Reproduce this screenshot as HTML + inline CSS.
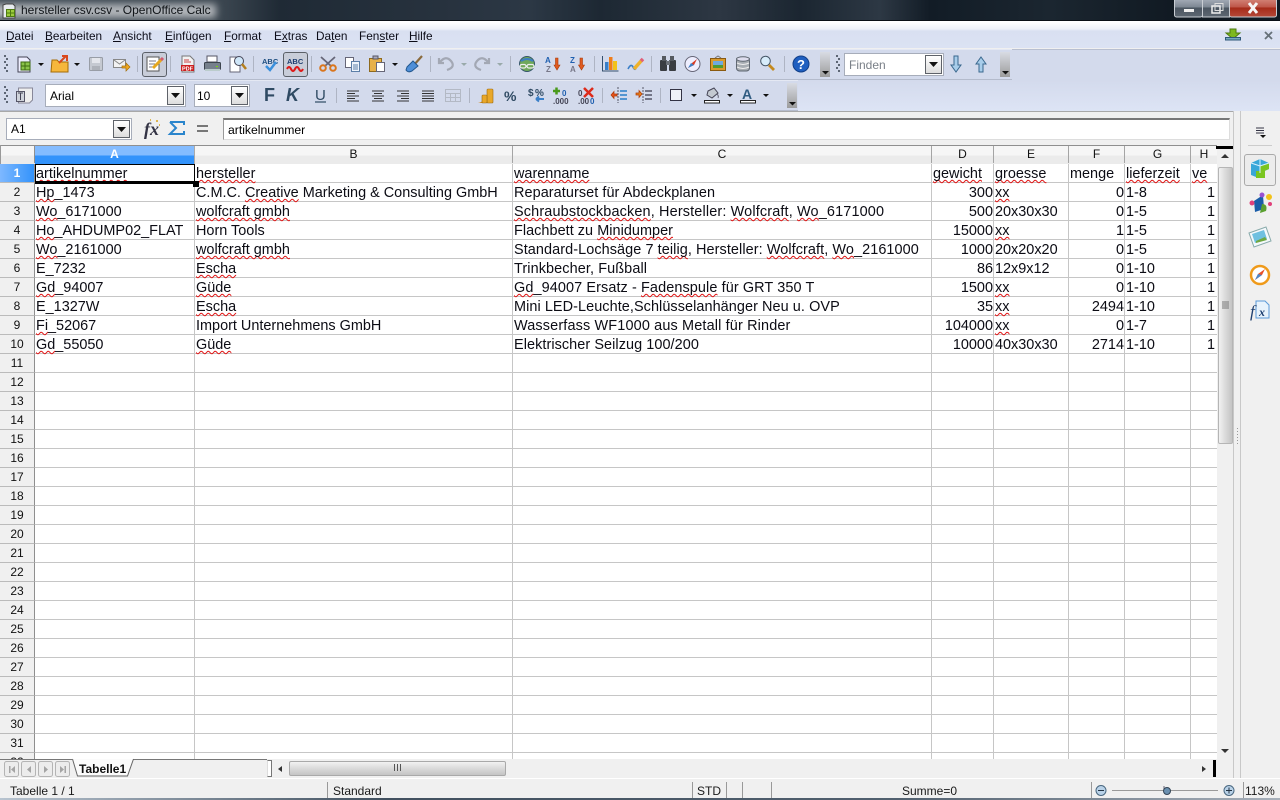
<!DOCTYPE html>
<html lang="de"><head><meta charset="utf-8"><title>hersteller csv.csv - OpenOffice Calc</title>
<style>
html,body{margin:0;padding:0;width:1280px;height:800px;overflow:hidden;background:#f0f0f0}
body{position:relative;font-family:"Liberation Sans",sans-serif;font-size:12px;color:#000}
div,span.p{position:absolute}
.title{left:0;top:0;width:1280px;height:20px;overflow:hidden;background:linear-gradient(90deg,#3f4a54 0,#3a454f 225px,#1f2a35 280px,#27323e 440px,#2c3845 530px,#1d2833 600px,#2d3743 720px,#1b2631 800px,#2d3844 880px,#121c26 930px,#1b2630 1050px,#111a23 1170px)}
.glow{left:-12px;top:4px;width:228px;height:14px;background:#b4b8bc;filter:blur(4px)}
.ttx{left:21px;top:2px;font-size:12px;line-height:16px;color:#101418;white-space:nowrap}
.menu{left:0;top:22px;width:1280px;height:26px;background:linear-gradient(#fff 0,#eef1f8 7px,#d9e0f1 9px,#dbe2f3 26px)}
.m{top:29px;line-height:14px;white-space:nowrap;color:#0c0c18;font-size:11.8px}
.m u{text-decoration:underline}
.tb{left:0;top:49px;width:1280px;height:62px;background:#d3daec;border-top:1px solid #b8bfd0}
.tb2{left:798px;top:80px;width:482px;height:31px;background:linear-gradient(#d3daec,#dde4f5)}
.bar{background:#d3daec;border-bottom:1px solid #b4bbcc;border-top:1px solid #e4e8f3;box-sizing:border-box}
.sep{width:1px;background:#aeb4c3}
.box{background:#fff;border:1px solid #a7adba;box-sizing:border-box}
.dd{background:linear-gradient(#fff,#ddd);border:1px solid #5e6269;box-sizing:border-box}
.ov{width:10px;background:linear-gradient(#d8dbe3,#9c9c9c)}
.fx{left:0;top:111px;width:1280px;height:34px;background:#f0f0f0;border-top:1px solid #a8a8a8;box-sizing:border-box}
.head{left:0;top:145px;width:1217px;height:19px;background:linear-gradient(#f6f6f6 0,#f6f6f6 9px,#ebebeb 10px,#ebebeb 18px);border-top:1px solid #8f8f8f;box-sizing:border-box}
.ch{top:146px;height:17px;line-height:17px;text-align:center;color:#111;border-right:1px solid #a5a5a5;box-sizing:border-box;font-size:12px}
.sheet{left:0;top:164px;width:1217px;height:595px;overflow:hidden;background:#fff}
.rn{left:0;width:35px;height:19px;line-height:18px;text-align:center;background:#f0f0f0;border-right:1px solid #8f8f8f;border-bottom:1px solid #bbb;box-sizing:border-box;font-size:12px;color:#111}
.hl{left:35px;width:1182px;height:1px;background:#c6c6c6}
.vl{top:0;width:1px;height:595px;background:#c6c6c6}
.c{height:19px;line-height:21px;font-size:14.45px;white-space:nowrap;color:#0c0c14}
.c i{font-style:normal;text-decoration:underline wavy #e01010 1px;text-underline-offset:1px;text-decoration-skip-ink:none}
.n{text-align:right}
.st{top:785px;line-height:12px;white-space:nowrap;color:#1a1a1a;font-size:12px}
</style></head><body>
<div class="title"><div class="glow"></div></div>
<div style="left:0;top:20px;width:1280px;height:2px;background:linear-gradient(#0a0f14 50%,#fff 50%)"></div>
<div class="ttx">hersteller csv.csv - OpenOffice Calc</div>
<div class="menu"></div>
<div class="m" style="left:6px"><u>D</u>atei</div>
<div class="m" style="left:45px"><u>B</u>earbeiten</div>
<div class="m" style="left:113px"><u>A</u>nsicht</div>
<div class="m" style="left:165px"><u>E</u>infügen</div>
<div class="m" style="left:224px"><u>F</u>ormat</div>
<div class="m" style="left:274px">E<u>x</u>tras</div>
<div class="m" style="left:316px">Da<u>t</u>en</div>
<div class="m" style="left:359px">Fen<u>s</u>ter</div>
<div class="m" style="left:409px"><u>H</u>ilfe</div>
<div class="tb"></div><div class="tb2"></div>
<div class="bar" style="left:0;top:49px;width:833px;height:31px"></div>
<div class="bar" style="left:833px;top:49px;width:179px;height:31px"></div>
<div class="bar" style="left:0;top:80px;width:798px;height:31px"></div>
<div class="sep" style="left:137px;top:56px;height:16px"></div><div class="sep" style="left:170px;top:56px;height:16px"></div><div class="sep" style="left:253px;top:56px;height:16px"></div><div class="sep" style="left:311px;top:56px;height:16px"></div><div class="sep" style="left:430px;top:56px;height:16px"></div><div class="sep" style="left:510px;top:56px;height:16px"></div><div class="sep" style="left:594px;top:56px;height:16px"></div><div class="sep" style="left:651px;top:56px;height:16px"></div><div class="sep" style="left:784px;top:56px;height:16px"></div>
<div class="sep" style="left:336px;top:88px;height:15px"></div><div class="sep" style="left:469px;top:88px;height:15px"></div><div class="sep" style="left:602px;top:88px;height:15px"></div><div class="sep" style="left:660px;top:88px;height:15px"></div>
<div style="left:142px;top:52px;width:25px;height:25px;background:#c8cdd9;border:1px solid #5b6068;border-radius:3px;box-sizing:border-box"></div>
<div style="left:283px;top:52px;width:25px;height:25px;background:#c8cdd9;border:1px solid #5b6068;border-radius:3px;box-sizing:border-box"></div>
<div class="ov" style="left:820px;top:52px;height:25px"></div>
<div class="ov" style="left:1000px;top:52px;height:25px"></div>
<div class="ov" style="left:787px;top:83px;height:25px"></div>
<div class="box" style="left:844px;top:53px;width:100px;height:23px;line-height:22px;padding-left:4px;color:#7a8088;font-size:12px">Finden</div>
<div class="dd" style="left:925px;top:55px;width:17px;height:19px"></div>
<div class="box" style="left:45px;top:84px;width:141px;height:23px;line-height:22px;padding-left:4px;font-size:12px">Arial</div>
<div class="dd" style="left:167px;top:86px;width:17px;height:19px"></div>
<div class="box" style="left:194px;top:84px;width:56px;height:23px;line-height:22px;padding-left:2px;font-size:12px">10</div>
<div class="dd" style="left:231px;top:86px;width:17px;height:19px"></div>
<div class="fx"></div>
<div class="box" style="left:6px;top:118px;width:126px;height:22px;line-height:20px;padding-left:4px;font-size:12px">A1</div>
<div class="dd" style="left:113px;top:120px;width:17px;height:18px"></div>
<div class="box" style="left:223px;top:118px;width:1007px;height:22px;line-height:20px;padding-left:4px;font-size:12.2px;border-color:#ddd;border-top:2px solid #777;border-left:1px solid #999">artikelnummer</div>
<div class="head"></div>
<div style="left:35px;top:146px;width:160px;height:18px;background:linear-gradient(#84bcff 0,#84bcff 9px,#3393fb 10px);border-right:1px solid #aaa;box-sizing:border-box;color:#fff;font-weight:bold;text-align:center;line-height:17px">A</div>
<div class="ch" style="left:195px;width:318px">B</div>
<div class="ch" style="left:513px;width:419px">C</div>
<div class="ch" style="left:932px;width:62px">D</div>
<div class="ch" style="left:994px;width:75px">E</div>
<div class="ch" style="left:1069px;width:56px">F</div>
<div class="ch" style="left:1125px;width:66px">G</div>
<div class="ch" style="left:1191px;width:26px;border-right:0">H</div>
<div class="ch" style="left:0;width:35px;border-right:1px solid #8f8f8f"></div>
<div style="left:0;top:145px;width:1px;height:614px;background:#999"></div>
<div class="sheet">
<div class="vl" style="left:194px"></div><div class="vl" style="left:512px"></div><div class="vl" style="left:931px"></div><div class="vl" style="left:993px"></div><div class="vl" style="left:1068px"></div><div class="vl" style="left:1124px"></div><div class="vl" style="left:1190px"></div>
<div class="hl" style="top:18px"></div><div class="hl" style="top:37px"></div><div class="hl" style="top:56px"></div><div class="hl" style="top:75px"></div><div class="hl" style="top:94px"></div><div class="hl" style="top:113px"></div><div class="hl" style="top:132px"></div><div class="hl" style="top:151px"></div><div class="hl" style="top:170px"></div><div class="hl" style="top:189px"></div><div class="hl" style="top:208px"></div><div class="hl" style="top:227px"></div><div class="hl" style="top:246px"></div><div class="hl" style="top:265px"></div><div class="hl" style="top:284px"></div><div class="hl" style="top:303px"></div><div class="hl" style="top:322px"></div><div class="hl" style="top:341px"></div><div class="hl" style="top:360px"></div><div class="hl" style="top:379px"></div><div class="hl" style="top:398px"></div><div class="hl" style="top:417px"></div><div class="hl" style="top:436px"></div><div class="hl" style="top:455px"></div><div class="hl" style="top:474px"></div><div class="hl" style="top:493px"></div><div class="hl" style="top:512px"></div><div class="hl" style="top:531px"></div><div class="hl" style="top:550px"></div><div class="hl" style="top:569px"></div><div class="hl" style="top:588px"></div>
<div class="rn" style="top:0;background:linear-gradient(90deg,#7db8ff,#3393fb);color:#fff;font-weight:bold">1</div>
<div class="rn" style="top:19px">2</div><div class="rn" style="top:38px">3</div><div class="rn" style="top:57px">4</div><div class="rn" style="top:76px">5</div><div class="rn" style="top:95px">6</div><div class="rn" style="top:114px">7</div><div class="rn" style="top:133px">8</div><div class="rn" style="top:152px">9</div><div class="rn" style="top:171px">10</div><div class="rn" style="top:190px">11</div><div class="rn" style="top:209px">12</div><div class="rn" style="top:228px">13</div><div class="rn" style="top:247px">14</div><div class="rn" style="top:266px">15</div><div class="rn" style="top:285px">16</div><div class="rn" style="top:304px">17</div><div class="rn" style="top:323px">18</div><div class="rn" style="top:342px">19</div><div class="rn" style="top:361px">20</div><div class="rn" style="top:380px">21</div><div class="rn" style="top:399px">22</div><div class="rn" style="top:418px">23</div><div class="rn" style="top:437px">24</div><div class="rn" style="top:456px">25</div><div class="rn" style="top:475px">26</div><div class="rn" style="top:494px">27</div><div class="rn" style="top:513px">28</div><div class="rn" style="top:532px">29</div><div class="rn" style="top:551px">30</div><div class="rn" style="top:570px">31</div><div class="rn" style="top:589px">32</div>
<div class="c" style="left:36px;top:0"><i>artikelnummer</i></div><div class="c" style="left:196px;top:0"><i>hersteller</i></div><div class="c" style="left:514px;top:0"><i>warenname</i></div><div class="c" style="left:933px;top:0"><i>gewicht</i></div><div class="c" style="left:995px;top:0"><i>groesse</i></div><div class="c" style="left:1070px;top:0">menge</div><div class="c" style="left:1126px;top:0"><i>lieferzeit</i></div><div class="c" style="left:1192px;top:0"><i>ve</i></div>
<div class="c" style="left:36px;top:19px"><i>Hp</i>_1473</div><div class="c" style="left:196px;top:19px">C.M.C. <i>Creative</i> Marketing &amp; Consulting GmbH</div><div class="c" style="left:514px;top:19px;letter-spacing:.07px">Reparaturset für Abdeckplanen</div><div class="c n" style="left:932px;width:61px;top:19px">300</div><div class="c" style="left:995px;top:19px"><i>xx</i></div><div class="c n" style="left:1069px;width:55px;top:19px">0</div><div class="c" style="left:1126px;top:19px">1-8</div><div class="c n" style="left:1191px;width:24px;top:19px">1</div>
<div class="c" style="left:36px;top:38px"><i>Wo</i>_6171000</div><div class="c" style="left:196px;top:38px"><i>wolfcraft gmbh</i></div><div class="c" style="left:514px;top:38px;letter-spacing:.15px"><i>Schraubstockbacken</i>, Hersteller: <i>Wolfcraft</i>, <i>Wo</i>_6171000</div><div class="c n" style="left:932px;width:61px;top:38px">500</div><div class="c" style="left:995px;top:38px">20x30x30</div><div class="c n" style="left:1069px;width:55px;top:38px">0</div><div class="c" style="left:1126px;top:38px">1-5</div><div class="c n" style="left:1191px;width:24px;top:38px">1</div>
<div class="c" style="left:36px;top:57px"><i>Ho</i>_AHDUMP02_FLAT</div><div class="c" style="left:196px;top:57px">Horn Tools</div><div class="c" style="left:514px;top:57px;letter-spacing:.04px">Flachbett zu <i>Minidumper</i></div><div class="c n" style="left:932px;width:61px;top:57px">15000</div><div class="c" style="left:995px;top:57px"><i>xx</i></div><div class="c n" style="left:1069px;width:55px;top:57px">1</div><div class="c" style="left:1126px;top:57px">1-5</div><div class="c n" style="left:1191px;width:24px;top:57px">1</div>
<div class="c" style="left:36px;top:76px"><i>Wo</i>_2161000</div><div class="c" style="left:196px;top:76px"><i>wolfcraft gmbh</i></div><div class="c" style="left:514px;top:76px;letter-spacing:.08px">Standard-Lochsäge 7 <i>teilig</i>, Hersteller: <i>Wolfcraft</i>, <i>Wo</i>_2161000</div><div class="c n" style="left:932px;width:61px;top:76px">1000</div><div class="c" style="left:995px;top:76px">20x20x20</div><div class="c n" style="left:1069px;width:55px;top:76px">0</div><div class="c" style="left:1126px;top:76px">1-5</div><div class="c n" style="left:1191px;width:24px;top:76px">1</div>
<div class="c" style="left:36px;top:95px">E_7232</div><div class="c" style="left:196px;top:95px"><i>Escha</i></div><div class="c" style="left:514px;top:95px;letter-spacing:.1px">Trinkbecher, Fußball</div><div class="c n" style="left:932px;width:61px;top:95px">86</div><div class="c" style="left:995px;top:95px">12x9x12</div><div class="c n" style="left:1069px;width:55px;top:95px">0</div><div class="c" style="left:1126px;top:95px">1-10</div><div class="c n" style="left:1191px;width:24px;top:95px">1</div>
<div class="c" style="left:36px;top:114px"><i>Gd</i>_94007</div><div class="c" style="left:196px;top:114px"><i>Güde</i></div><div class="c" style="left:514px;top:114px;letter-spacing:.1px"><i>Gd</i>_94007 Ersatz - <i>Fadenspule</i> für GRT 350 T</div><div class="c n" style="left:932px;width:61px;top:114px">1500</div><div class="c" style="left:995px;top:114px"><i>xx</i></div><div class="c n" style="left:1069px;width:55px;top:114px">0</div><div class="c" style="left:1126px;top:114px">1-10</div><div class="c n" style="left:1191px;width:24px;top:114px">1</div>
<div class="c" style="left:36px;top:133px">E_1327W</div><div class="c" style="left:196px;top:133px"><i>Escha</i></div><div class="c" style="left:514px;top:133px;letter-spacing:.07px">Mini LED-Leuchte,Schlüsselanhänger Neu u. OVP</div><div class="c n" style="left:932px;width:61px;top:133px">35</div><div class="c" style="left:995px;top:133px"><i>xx</i></div><div class="c n" style="left:1069px;width:55px;top:133px">2494</div><div class="c" style="left:1126px;top:133px">1-10</div><div class="c n" style="left:1191px;width:24px;top:133px">1</div>
<div class="c" style="left:36px;top:152px"><i>Fi</i>_52067</div><div class="c" style="left:196px;top:152px">Import Unternehmens GmbH</div><div class="c" style="left:514px;top:152px;letter-spacing:.15px">Wasserfass WF1000 aus Metall für Rinder</div><div class="c n" style="left:932px;width:61px;top:152px">104000</div><div class="c" style="left:995px;top:152px"><i>xx</i></div><div class="c n" style="left:1069px;width:55px;top:152px">0</div><div class="c" style="left:1126px;top:152px">1-7</div><div class="c n" style="left:1191px;width:24px;top:152px">1</div>
<div class="c" style="left:36px;top:171px"><i>Gd</i>_55050</div><div class="c" style="left:196px;top:171px"><i>Güde</i></div><div class="c" style="left:514px;top:171px;letter-spacing:.07px">Elektrischer Seilzug 100/200</div><div class="c n" style="left:932px;width:61px;top:171px">10000</div><div class="c" style="left:995px;top:171px">40x30x30</div><div class="c n" style="left:1069px;width:55px;top:171px">2714</div><div class="c" style="left:1126px;top:171px">1-10</div><div class="c n" style="left:1191px;width:24px;top:171px">1</div>
</div>
<div style="left:35px;top:164px;width:160px;height:20px;border:solid #000;border-width:1px 1px 3px 1px;box-sizing:border-box"></div>
<div style="left:193px;top:181px;width:6px;height:6px;background:#000"></div>
<div style="left:1217px;top:145px;width:16px;height:614px;background:#f0f0f0"></div>
<div style="left:1216px;top:146px;width:17px;height:3px;background:#000"></div>
<div style="left:1218px;top:167px;width:15px;height:277px;background:linear-gradient(90deg,#f2f2f2,#dcdcdc 45%,#c4c4c4);border:1px solid #b5b5b5;border-radius:2px;box-sizing:border-box"></div>
<div style="left:0;top:759px;width:1233px;height:19px;background:#f0f0f0"></div>
<div style="left:289px;top:761px;width:217px;height:15px;background:linear-gradient(#f2f2f2,#dcdcdc 45%,#c4c4c4);border:1px solid #a9a9a9;border-radius:2px;box-sizing:border-box"></div>
<div style="left:1213px;top:760px;width:3px;height:17px;background:#000"></div>
<div style="left:267px;top:760px;width:5px;height:17px;background:#fff;border:1px solid #777;border-left-color:#ddd;box-sizing:border-box"></div>
<div style="left:1233px;top:111px;width:47px;height:667px;background:#f0f0f0"></div>
<div style="left:1233px;top:111px;width:1px;height:667px;background:#c8c8c8"></div>
<div style="left:1240px;top:111px;width:1px;height:667px;background:#c8c8c8"></div>
<div style="left:1244px;top:154px;width:32px;height:32px;border:1px solid #aaa;border-radius:3px;box-sizing:border-box;background:#ececec"></div>
<div style="left:0;top:778px;width:1280px;height:22px;background:#f0f0f0;border-top:1px solid #fff;box-sizing:border-box"></div>
<div class="sep" style="left:327px;top:782px;height:16px;background:#999"></div><div class="sep" style="left:692px;top:782px;height:16px;background:#999"></div><div class="sep" style="left:726px;top:782px;height:16px;background:#999"></div><div class="sep" style="left:742px;top:782px;height:16px;background:#999"></div><div class="sep" style="left:771px;top:782px;height:16px;background:#999"></div><div class="sep" style="left:1091px;top:782px;height:16px;background:#999"></div><div class="sep" style="left:1243px;top:782px;height:16px;background:#999"></div>
<div class="st" style="left:10px">Tabelle 1 / 1</div><div class="st" style="left:333px">Standard</div><div class="st" style="left:697px">STD</div><div class="st" style="left:902px">Summe=0</div><div class="st" style="left:1245px">113%</div>
<div style="left:0;top:798px;width:1280px;height:2px;background:linear-gradient(90deg,#b8c4d0,#41505f 30%,#51606f 70%,#a7b0ba)"></div>
<svg width="1280" height="800" viewBox="0 0 1280 800" style="position:absolute;left:0;top:0">
<defs>
<linearGradient id="btn" x1="0" y1="0" x2="0" y2="1"><stop offset="0" stop-color="#aab2bd"/><stop offset=".5" stop-color="#7b8591"/><stop offset=".51" stop-color="#4a5560"/><stop offset="1" stop-color="#5d6772"/></linearGradient>
<linearGradient id="cl" x1="0" y1="0" x2="0" y2="1"><stop offset="0" stop-color="#d58a7e"/><stop offset=".5" stop-color="#bd5446"/><stop offset=".51" stop-color="#a52a18"/><stop offset="1" stop-color="#b54a3a"/></linearGradient>
</defs>
<!-- title icon -->
<path d="M3 5l3-1 7 0 2 2v12H3z" fill="#e8ecef" stroke="#444"/><rect x="6.500" y="9.500" width="8" height="7" fill="#9ccc3c" stroke="#4e7a12"/><path d="M10.500 9.500v7M6.500 13h8" stroke="#4e7a12"/>
<!-- window buttons -->
<rect x="1174.500" y="-2" width="28" height="19" rx="2" fill="url(#btn)" stroke="#c9ced4"/><rect x="1202.500" y="-2" width="27" height="19" fill="url(#btn)" stroke="#c9ced4"/><rect x="1229.500" y="-2" width="47" height="19" rx="2" fill="url(#cl)" stroke="#c9ced4"/>
<rect x="1184" y="9" width="10" height="3" fill="#eee"/><rect x="1212" y="6" width="8" height="7" fill="none" stroke="#eee" stroke-width="1.500"/><rect x="1215" y="3.500" width="8" height="7" fill="none" stroke="#ddd"/>
<path d="M1249 3L1257 13M1257 3L1249 13" stroke="#f6f6f6" stroke-width="3"/>
<!-- menu right -->
<path d="M1230 29h6v4h4l-7 6-7-6h4z" fill="#7db81e" stroke="#4d7a0e"/><rect x="1225.500" y="37.500" width="15" height="2.500" fill="#7ab" stroke="#2f5878"/>
<path d="M1265 32L1272 39M1272 32L1265 39" stroke="#667078" stroke-width="1.800"/>
<!-- grips -->
<g fill="#5d6675"><rect x="4" y="55" width="2" height="2"/><rect x="6" y="58" width="2" height="2"/><rect x="4" y="61" width="2" height="2"/><rect x="6" y="64" width="2" height="2"/><rect x="4" y="67" width="2" height="2"/><rect x="6" y="70" width="2" height="2"/><rect x="4" y="86" width="2" height="2"/><rect x="6" y="89" width="2" height="2"/><rect x="4" y="92" width="2" height="2"/><rect x="6" y="95" width="2" height="2"/><rect x="4" y="98" width="2" height="2"/><rect x="6" y="101" width="2" height="2"/><rect x="836" y="55" width="2" height="2"/><rect x="838" y="58" width="2" height="2"/><rect x="836" y="61" width="2" height="2"/><rect x="838" y="64" width="2" height="2"/><rect x="836" y="67" width="2" height="2"/><rect x="838" y="70" width="2" height="2"/></g>
<!-- small arrows -->
<g fill="#111"><path d="M38 63h6l-3 3z"/><path d="M74 63h6l-3 3z"/><path d="M392 63h6l-3 3z"/><path d="M691 94h6l-3 3z"/><path d="M727 94h6l-3 3z"/><path d="M763 94h6l-3 3z"/><path d="M822 71h7l-3.500 3.500z"/><path d="M1002 71h7l-3.500 3.500z"/><path d="M789 102h7l-3.500 3.500z"/><path d="M929 62h9l-4.500 5z"/><path d="M171 93h9l-4.500 5z"/><path d="M235 93h9l-4.500 5z"/><path d="M117 127h9l-4.500 5z"/></g>
<g fill="#9aa"><path d="M461 63h6l-3 3z"/><path d="M497 63h6l-3 3z"/></g>
<!-- new -->
<path d="M18 57h9l3 3v12H18z" fill="#eef" stroke="#445"/><rect x="21" y="62" width="9" height="8" fill="#8bc34a" stroke="#3e6b12"/><path d="M25 62v8M21 66h9" stroke="#3e6b12"/>
<!-- open -->
<path d="M52 60h5l2 2h9v10H51z" fill="#f6b73c" stroke="#a46c08"/><path d="M59 63L66 56M62 56h5v5" stroke="#d9481c" stroke-width="2" fill="none"/>
<!-- save -->
<rect x="89.500" y="57.500" width="13" height="13" rx="1" fill="#c5c9d1" stroke="#989da6"/><rect x="92" y="58" width="8" height="5" fill="#e4e6ec"/><rect x="92" y="66" width="8" height="4" fill="#aeb2ba"/>
<!-- mail -->
<rect x="113.500" y="59.500" width="12" height="8" fill="#f2f2f2" stroke="#888"/><path d="M114 60l5.500 4 5.500-4" stroke="#888" fill="none"/><path d="M122 66h4v-3l4 4-4 4v-3h-4z" fill="#f1a820" stroke="#a56f08" stroke-width=".7"/>
<!-- doc edit -->
<path d="M147 57h12v14h-12z" fill="#fff" stroke="#555"/><path d="M149 61h7M149 64h6M149 67h5" stroke="#778"/><path d="M153 68L162 59" stroke="#e6a820" stroke-width="3"/><path d="M161 60l2-2" stroke="#d05a70" stroke-width="3"/>
<!-- pdf -->
<path d="M182 56h8l4 4v12h-12z" fill="#f2f2f2" stroke="#777"/><rect x="181" y="65" width="13" height="6" fill="#cc1f1f"/><text x="182" y="70.500" font-size="5.500" font-weight="bold" fill="#fff" font-family="Liberation Sans">PDF</text><path d="M184 60h5M184 62h7" stroke="#c44"/>
<!-- print -->
<rect x="207" y="56" width="10" height="6" fill="#fff" stroke="#556"/><rect x="204.500" y="62.500" width="16" height="7" rx="1" fill="#76808c" stroke="#3c444e"/><rect x="205" y="69" width="15" height="2" fill="#bcc"/><rect x="216" y="66" width="2" height="1" fill="#7d0"/>
<!-- preview -->
<path d="M230 57h10v15h-10z" fill="#fff" stroke="#667"/><circle cx="239" cy="61" r="4.500" fill="#cfe6f8" stroke="#445"/><path d="M242 64l4 5" stroke="#b57f1d" stroke-width="2.500"/>
<!-- spell -->
<text x="262" y="64" font-size="7.500" font-weight="bold" fill="#1d4d7f" font-family="Liberation Sans">ABC</text><path d="M266 66l4 4 6-8" stroke="#3a8fdc" stroke-width="2.500" fill="none"/>
<!-- autospell -->
<text x="287" y="64" font-size="7.500" font-weight="bold" fill="#1d3d6f" font-family="Liberation Sans">ABC</text><path d="M287 69q2-4 4 0t4 0 4 0 4 0" stroke="#dd1a1a" stroke-width="2" fill="none"/>
<!-- scissors -->
<path d="M321 57l10 9M335 57l-10 9" stroke="#667" stroke-width="1.800"/><circle cx="323" cy="68" r="2.800" fill="none" stroke="#d9751c" stroke-width="2"/><circle cx="333" cy="68" r="2.800" fill="none" stroke="#d9751c" stroke-width="2"/>
<!-- copy -->
<path d="M345.500 57.500h8v10h-8z" fill="#fff" stroke="#667"/><path d="M351.500 61.500h8v10h-8z" fill="#eef4fb" stroke="#5c7fa8"/><path d="M353 65h5M353 67h5M353 69h5" stroke="#5c7fa8"/>
<!-- paste -->
<rect x="369.500" y="58.500" width="12" height="13" fill="#e7b14a" stroke="#8e6a1e"/><rect x="373" y="56" width="5" height="3" fill="#aab" stroke="#556"/><path d="M376.500 62.500h8v9h-8z" fill="#fff" stroke="#667"/>
<!-- brush -->
<path d="M413 66l9-10" stroke="#8a6a3c" stroke-width="2.200"/><path d="M407 67l6-6 5 5-6 5q-4 2-6-1z" fill="#4f8fd8" stroke="#23588f"/>
<!-- undo redo -->
<path d="M439 58v5h5M440 62q6-7 11-1t-4 9" fill="none" stroke="#a3a8b4" stroke-width="2.200"/>
<path d="M489 58v5h-5M488 62q-6-7-11-1t4 9" fill="none" stroke="#a3a8b4" stroke-width="2.200"/>
<!-- hyperlink -->
<circle cx="527" cy="64" r="7.500" fill="#6fa85a" stroke="#35566a"/><path d="M521 61q6-4 12 0" fill="none" stroke="#3d7ec2" stroke-width="2"/><rect x="520" y="64.500" width="6" height="3.500" rx="1.700" fill="none" stroke="#eee" stroke-width="1.200"/><rect x="527" y="64.500" width="7" height="3.500" rx="1.700" fill="none" stroke="#eee" stroke-width="1.200"/>
<!-- sort -->
<text x="545" y="63" font-size="8" font-weight="bold" fill="#2060b0" font-family="Liberation Sans">A</text><text x="546" y="72" font-size="8" font-weight="bold" fill="#778" font-family="Liberation Sans">Z</text><path d="M555.500 58h2.500v7h2l-3 5-3-5h1.500z" fill="#e05a20" stroke="#a83a08" stroke-width=".6"/>
<text x="570" y="63" font-size="8" font-weight="bold" fill="#2060b0" font-family="Liberation Sans">Z</text><text x="570" y="72" font-size="8" font-weight="bold" fill="#778" font-family="Liberation Sans">A</text><path d="M580 58h2.500v7h2l-3 5-3-5h1.500z" fill="#e05a20" stroke="#a83a08" stroke-width=".6"/>
<!-- chart -->
<path d="M602.500 56v15h16" fill="none" stroke="#35506e"/><rect x="605" y="62" width="3.500" height="8" fill="#3a7fc8"/><rect x="609" y="57" width="3.500" height="13" fill="#ef7d1a"/><rect x="613" y="61" width="4" height="9" fill="#f2c21a"/>
<!-- draw -->
<path d="M628 69q3-6 5-2t3 1" fill="none" stroke="#3a7fc8" stroke-width="1.600"/><path d="M634 69l8-9" stroke="#efb22a" stroke-width="3.500"/><path d="M641 61l2-2" stroke="#e0607a" stroke-width="3.500"/>
<!-- binoculars -->
<rect x="660" y="60" width="7" height="11" rx="1" fill="#3a3d42"/><rect x="669" y="60" width="7" height="11" rx="1" fill="#3a3d42"/><rect x="662" y="56" width="4" height="5" fill="#555a60"/><rect x="670" y="56" width="4" height="5" fill="#555a60"/><rect x="666" y="61" width="4" height="4" fill="#6b7077"/>
<!-- navigator -->
<circle cx="692.500" cy="64" r="7.500" fill="#eef" stroke="#667"/><path d="M688 68l4-5 5-4-3 6z" fill="#d83a24"/><path d="M688 68l3-5 3 2z" fill="#3a7fc8"/>
<!-- gallery -->
<rect x="710.500" y="58.500" width="15" height="12" fill="#d99a2c" stroke="#8a5a10"/><rect x="713" y="61" width="10" height="7" fill="#6fa9df"/><rect x="713" y="65" width="10" height="3" fill="#4f9a32"/><path d="M715 58l3-2 3 2" fill="none" stroke="#777"/>
<!-- db -->
<rect x="736.500" y="58" width="13" height="13" rx="3" fill="#a7adb3" stroke="#5e6670"/><ellipse cx="743" cy="59" rx="6.500" ry="2.200" fill="#dde" stroke="#5e6670"/><path d="M737 63q6 3 12 0M737 67q6 3 12 0" fill="none" stroke="#eee"/>
<!-- find -->
<circle cx="765.500" cy="61" r="4.800" fill="#d7ecfa" stroke="#456"/><path d="M769 65l5 5" stroke="#c4891e" stroke-width="2.800"/>
<!-- help -->
<circle cx="801" cy="64" r="8" fill="#1f5fc0" stroke="#123f88"/><text x="797" y="69" font-size="13" font-weight="bold" fill="#fff" font-family="Liberation Sans">?</text>
<!-- find arrows -->
<path d="M954 56h4v9h3l-5 7-5-7h3z" fill="#a8cdea" stroke="#3a688e"/><path d="M981 57l5 7h-3v8h-4v-8h-3z" fill="#a8cdea" stroke="#3a688e"/>
<!-- styles -->
<path d="M18.500 88h14v12l-3 3h-11z" fill="#eee" stroke="#889"/><rect x="16.500" y="91.500" width="8" height="10" fill="#cfd3db" stroke="#556"/><path d="M18 93h5M20.500 93v7" stroke="#445"/>
<!-- bold etc -->
<text x="264" y="101" font-size="18" font-weight="bold" fill="#2f4a63" font-family="Liberation Sans">F</text>
<text x="286" y="101" font-size="18" font-weight="bold" font-style="italic" fill="#2f4a63" font-family="Liberation Sans">K</text>
<text x="315" y="100" font-size="15" fill="#2f4a63" font-family="Liberation Sans">U</text><path d="M315 102h11" stroke="#2f4a63" stroke-width="1.200"/>
<path d="M347 91h12M347 93.500h8M347 96h12M347 98.500h8M347 101h12" stroke="#333" fill="none"/>
<path d="M372 91h12M374 93.500h8M372 96h12M374 98.500h8M372 101h12" stroke="#333" fill="none"/>
<path d="M397 91h12M401 93.500h8M397 96h12M401 98.500h8M397 101h12" stroke="#333" fill="none"/>
<path d="M422 91h12M422 93.500h12M422 96h12M422 98.500h12M422 101h12" stroke="#333" fill="none"/>
<path d="M445.500 89.500h15v12h-15zM445.500 93.500h15M445.500 97.500h15M450.500 93.500v8M455.500 93.500v8" fill="none" stroke="#b3b9c5"/>
<!-- currency -->
<path d="M478 103q5-1 7-5h2v5z" fill="#d08a1c"/><g fill="#e9a82a" stroke="#9c6a10" stroke-width=".6"><rect x="487" y="89" width="6" height="14" rx="1"/><rect x="482" y="95" width="5" height="8" rx="1"/></g>
<text x="504" y="101" font-size="14" font-weight="bold" fill="#2f4a63" font-family="Liberation Sans">%</text>
<text x="528" y="96" font-size="10" font-weight="bold" fill="#2f4a63" font-family="Liberation Sans">$</text><text x="535" y="96" font-size="10" font-weight="bold" fill="#2f4a63" font-family="Liberation Sans">%</text><path d="M544 99h-8M536 99l3-2.500M536 99l3 2.500" stroke="#3a7fc8" stroke-width="2"/>
<path d="M553 91h7M556.500 87.500v7" stroke="#4a9a1c" stroke-width="2.500"/><text x="562" y="96" font-size="8" font-weight="bold" fill="#2060b0" font-family="Liberation Sans">0</text><text x="553" y="104" font-size="8" font-weight="bold" fill="#445" font-family="Liberation Sans">.000</text>
<text x="578" y="96" font-size="8" font-weight="bold" fill="#445" font-family="Liberation Sans">0</text><path d="M584 88l9 9M593 88l-9 9" stroke="#dd2a1a" stroke-width="2.500"/><text x="578" y="104" font-size="8" font-weight="bold" fill="#445" font-family="Liberation Sans">.00</text><text x="590" y="104" font-size="8" font-weight="bold" fill="#2060b0" font-family="Liberation Sans">0</text>
<!-- indent -->
<path d="M620 91h7M620 95h7M620 99h7" stroke="#2a80c8" stroke-width="1.500"/><path d="M618 87v16" stroke="#556" stroke-dasharray="2 1"/><path d="M617 96h-3v2.500l-3-3.500 3-3.500v2.500h3z" fill="#e8531a" stroke="#b03a08" stroke-width=".7"/>
<path d="M645 91h7M645 95h7M645 99h7" stroke="#556" stroke-width="1.500"/><path d="M643 87v16" stroke="#556" stroke-dasharray="2 1"/><path d="M636 93h3v-2.500l3 3.500-3 3.500v-2.500h-3z" fill="#e8831a" stroke="#b03a08" stroke-width=".7"/>
<!-- border, bg, font color -->
<rect x="670.500" y="89.500" width="11" height="11" fill="#eef1f7" stroke="#334"/>
<path d="M708 91l6-3 4 5-6 5-5-3z" fill="#c3c9d1" stroke="#445"/><path d="M717 94q2 2 1 4" stroke="#667" fill="none"/><rect x="704.500" y="100.500" width="15" height="2.500" fill="#fff" stroke="#222"/>
<text x="742" y="99" font-size="14" font-weight="bold" fill="#2f5b80" font-family="Liberation Sans">A</text><rect x="740.500" y="100.500" width="15" height="2.500" fill="#fff" stroke="#222"/>
<!-- formula icons -->
<text x="144" y="135" font-size="18" font-style="italic" font-weight="bold" fill="#334" font-family="Liberation Serif">fx</text><path d="M150 120h1M156 121h2M159 125h1" stroke="#d9a21a" stroke-width="1.500"/>
<path d="M170 122h14v3M170 122l6 6-6 6h14v-3" fill="none" stroke="#2a85cc" stroke-width="2"/>
<path d="M197 126h11M197 131h11" stroke="#666" stroke-width="1.800"/>
<!-- sidebar top -->
<path d="M1256 128h8M1256 130.500h8M1256 133h8" stroke="#334"/><path d="M1260 135h6l-3 3z" fill="#111"/>
<path d="M1248 145.500h24" stroke="#ccc"/>
<!-- sidebar icons -->
<path d="M1260 159l-9 4v6l9 4 9-4v-6z" fill="#39a7d8"/><path d="M1260 166l9-3v6l-9 4z" fill="#7ac520"/><path d="M1251 168l5 2v7l-5-2z" fill="#39a7d8"/><path d="M1256 171h9v7h-9z" fill="#7ac520"/><path d="M1251 163l9 3 9-3M1260 159v14" stroke="#d8f0ff" fill="none"/>
<path d="M1254 201l9-6 1 14-9 3z" fill="#1a5da8"/><path d="M1262 204q6 0 4 7l-6 2z" fill="#5aa030"/><circle cx="1252" cy="203" r="2.500" fill="#e0407a"/><circle cx="1262" cy="195" r="2.500" fill="#9a50d0"/><circle cx="1269" cy="197" r="3" fill="#f2c21a"/><circle cx="1270" cy="204" r="2" fill="#e0407a"/>
<path d="M1249 233l17-6 5 14-17 6z" fill="#f4f8fc" stroke="#8aa"/><path d="M1252 234l12-4 3 9-12 4z" fill="#6fc0e0"/><path d="M1256 241l9-4 2 3-11 3z" fill="#6fa840"/>
<circle cx="1260" cy="275" r="9" fill="#fff" stroke="#ef9a1a" stroke-width="2.500"/><path d="M1255 280l3-6 7-5-3 6z" fill="#e8502a"/><path d="M1255 280l3-6 4 1z" fill="#4a88cc"/>
<path d="M1256 301h9l4 4v13h-13z" fill="#e8f3fc" stroke="#5a9ad8"/><text x="1250" y="317" font-size="17" font-style="italic" fill="#1d3f70" font-family="Liberation Serif">f</text><text x="1259" y="316" font-size="12" font-style="italic" font-weight="bold" fill="#1d3f70" font-family="Liberation Serif">x</text>
<!-- scrollbar marks -->
<path d="M1221 158h8l-4-4z" fill="#333"/><path d="M1221 749h8l-4 4z" fill="#333"/>
<path d="M1222 302h7M1222 304h7M1222 306h7M1222 308h7" stroke="#777"/>
<g stroke="#555"><path d="M394.500 764v7M397.500 764v7M400.500 764v7"/></g>
<path d="M282 766v6l-4-3z" fill="#333"/><path d="M1202 766v6l4-3z" fill="#333"/>
<path d="M1237.500 428v16" stroke="#999" stroke-dasharray="1 2"/>
<!-- nav buttons -->
<g fill="#ececec" stroke="#b4b4b4"><rect x="4.500" y="761.500" width="14" height="15" rx="2"/><rect x="21.500" y="761.500" width="14" height="15" rx="2"/><rect x="38.500" y="761.500" width="14" height="15" rx="2"/><rect x="55.500" y="761.500" width="14" height="15" rx="2"/></g>
<g fill="#a4a4a4"><rect x="9" y="766" width="1.500" height="7"/><path d="M15 766v7l-4-3.500z"/><path d="M31 766v7l-4-3.500z"/><path d="M44 766v7l4-3.500z"/><path d="M60 766v7l4-3.500z"/><rect x="64.500" y="766" width="1.500" height="7"/></g>
<path d="M0 759.500h72M133 759.500h134" stroke="#777"/>
<path d="M72.500 759l5 17h50l6-17" fill="#fbfbfb" stroke="#666"/>
<text x="79" y="773" font-size="12" font-weight="bold" fill="#111" font-family="Liberation Sans">Tabelle1</text>
<!-- zoom -->
<circle cx="1101" cy="790.500" r="5" fill="#b9d2e8" stroke="#4a6880"/><path d="M1098 790.500h6" stroke="#234"/>
<path d="M1112 790.500h106" stroke="#9a9a9a"/><path d="M1164 786v3" stroke="#667"/><circle cx="1167" cy="791" r="3.500" fill="#6a90b0" stroke="#345"/>
<circle cx="1229" cy="790.500" r="5" fill="#b9d2e8" stroke="#4a6880"/><path d="M1226 790.500h6M1229 787.500v6" stroke="#234"/>
</svg>
</body></html>
